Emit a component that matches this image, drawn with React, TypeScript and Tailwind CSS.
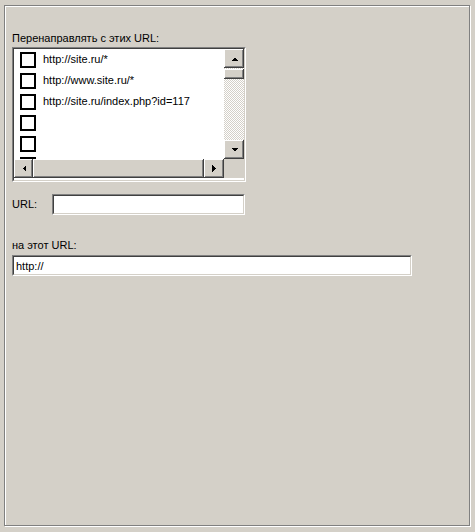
import type React from "react";

const font = "font-['Liberation_Sans',Arial,sans-serif] text-[11px] leading-[13px] text-black";

// classic win9x raised bevel
const raised =
  "bg-[#d4d0c8] shadow-[inset_-1px_-1px_0_#404040,inset_1px_1px_0_#ffffff,inset_-2px_-2px_0_#808080,inset_2px_2px_0_#d4d0c8]";

const Sunken = ({ className = "", children }: { className?: string; children?: React.ReactNode }) => (
  <div className={`border border-t-[#808080] border-l-[#808080] border-r-white border-b-white ${className}`}>
    <div className="h-full w-full border border-t-[#404040] border-l-[#404040] border-r-[#d4d0c8] border-b-[#d4d0c8] bg-white overflow-hidden">
      {children}
    </div>
  </div>
);

const Arrow = ({ dir }: { dir: "up" | "down" | "left" | "right" }) => {
  const vertical = dir === "up" || dir === "down";
  const points = {
    up: "0,4 7,4 3.5,0.5",
    down: "0,0 7,0 3.5,3.5",
    left: "4,0 4,7 0.5,3.5",
    right: "0,0 0,7 3.5,3.5",
  }[dir];
  return (
    <svg width={vertical ? 7 : 4} height={vertical ? 4 : 7} shapeRendering="crispEdges">
      <polygon points={points} fill="#000" />
    </svg>
  );
};

const ScrollButton = ({ dir, className = "" }: { dir: "up" | "down" | "left" | "right"; className?: string }) => (
  <div className={`${raised} flex items-center justify-center ${className}`}>
    <Arrow dir={dir} />
  </div>
);

const urls = ["http://site.ru/*", "http://www.site.ru/*", "http://site.ru/index.php?id=117", "", "", ""];

export default function App() {
  return (
    <div className={`w-[475px] h-[532px] bg-[#d4d0c8] pl-[4px] pt-[5px] ${font}`}>
      <div className="w-[466px] h-[521px] border border-[#808080] shadow-[1px_1px_0_#ffffff,inset_1px_1px_0_#ffffff] pl-[7px] pt-[26px]">
        <div>Перенаправлять с этих URL:</div>

        <Sunken className="mt-[2px] w-[234px] h-[135px]">
          <div className="flex h-full flex-col">
            <div className="flex h-[110px]">
              <div className="flex-1 overflow-hidden">
                {urls.map((u, i) => (
                  <div key={i} className="flex h-[21px] items-center pl-[6px]">
                    <div className="w-[16px] h-[16px] border-2 border-black bg-white shrink-0" />
                    <span className="ml-[7px] whitespace-nowrap">{u}</span>
                  </div>
                ))}
              </div>
              <div className="w-[20px] flex flex-col">
                <ScrollButton dir="up" className="h-[19px]" />
                <div className="flex-1 flex flex-col bg-[conic-gradient(#ffffff_90deg,#d4d0c8_90deg_180deg,#ffffff_180deg_270deg,#d4d0c8_270deg)] bg-[length:2px_2px]">
                  <div className={`${raised} h-[10px] mt-[1px]`} />
                </div>
                <ScrollButton dir="down" className="h-[19px]" />
              </div>
            </div>
            <div className="flex h-[19px] bg-[#d4d0c8]">
              <ScrollButton dir="left" className="w-[19px]" />
              <div className={`${raised} flex-1`} />
              <ScrollButton dir="right" className="w-[20px]" />
              <div className="w-[20px]" />
            </div>
          </div>
        </Sunken>

        <div className="mt-[12px] flex items-center h-[21px]">
          <div className="w-[40px]">URL:</div>
          <Sunken className="w-[193px] h-[21px]" />
        </div>

        <div className="mt-[24px]">на этот URL:</div>
        <Sunken className="mt-[3px] w-[400px] h-[21px]">
          <div className="pl-[2px] pt-[3px]">http://</div>
        </Sunken>
      </div>
    </div>
  );
}
